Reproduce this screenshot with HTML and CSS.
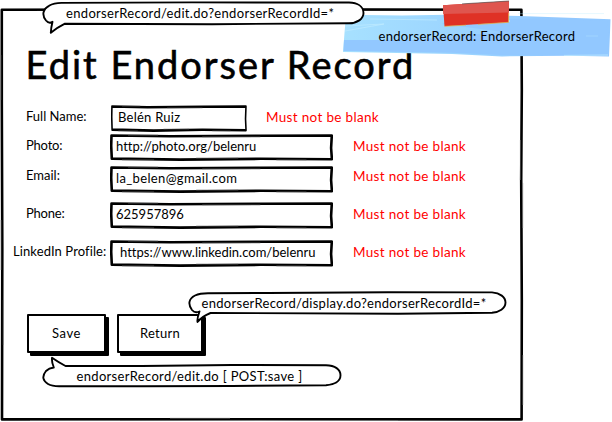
FILE: index.html
```html
<!DOCTYPE html>
<html lang="en">
<head>
<meta charset="utf-8">
<title>Edit Endorser Record</title>
<link rel="stylesheet" href="styles.css">
</head>
<body>
<svg class="defs" aria-hidden="true">
  <symbol id="field-outline" viewBox="0 0 223 27" preserveAspectRatio="none">
    <path class="edge" d="M1.5 1.5 L60 2.2 L150 1.7 L221.3 1.6 L220.6 14 L221.4 25.2 L150 24.8 L70 25.6 L1.8 24.6 L1.2 12 Z"/>
    <path class="streak" d="M18 1 H48 M92 3 H150 M12 26 H44 M86 24 H128 M166 26 H196"/>
  </symbol>
</svg>

<main class="window">
  <svg class="frame" viewBox="0 0 524 422" aria-hidden="true">
    <path d="M1.8 9.8 L250 9.4 L521.4 9.8 L521.8 90 L521.2 180 L521.8 300 L521.6 419.4 L260 419.2 L2 419.4 L2.3 250 L1.8 100 Z"/>
    <path class="streak" d="M522.7 183 V228 M520.4 140 V180 M522.8 355 V405 M30 420.500 H120 M170 418.3 H230 M300 420.500 H398 M.8 55 V100 M1 220 V270 M3.3 300 V345"/>
  </svg>

  <h1 class="title">Edit Endorser Record</h1>

  <form class="form">
    <div class="row row-name">
      <label class="label">Full Name:</label>
      <div class="field field-short"><svg class="outline"><use href="#field-outline"/></svg><span class="value v-name">Belén Ruiz</span></div>
      <span class="error">Must not be blank</span>
    </div>
    <div class="row row-photo">
      <label class="label l-photo">Photo:</label>
      <div class="field"><svg class="outline"><use href="#field-outline"/></svg><span class="value">http://photo.org/belenru</span></div>
      <span class="error">Must not be blank</span>
    </div>
    <div class="row row-email">
      <label class="label">Email:</label>
      <div class="field"><svg class="outline"><use href="#field-outline"/></svg><span class="value v-email">la_belen@gmail.com</span></div>
      <span class="error">Must not be blank</span>
    </div>
    <div class="row row-phone">
      <label class="label l-photo">Phone:</label>
      <div class="field"><svg class="outline"><use href="#field-outline"/></svg><span class="value">625957896</span></div>
      <span class="error">Must not be blank</span>
    </div>
    <div class="row row-linkedin">
      <label class="label l-linkedin">LinkedIn Profile:</label>
      <div class="field"><svg class="outline"><use href="#field-outline"/></svg><span class="value v-linkedin">https://www.linkedin.com/belenru</span></div>
      <span class="error">Must not be blank</span>
    </div>
  </form>

  <div class="actions">
    <button class="button save" type="button">Save</button>
    <button class="button return" type="button">Return</button>
  </div>
</main>

<aside class="note">
  <svg class="shape" viewBox="0 0 270 60" aria-hidden="true">
    <defs><linearGradient id="wash"><stop offset="0" stop-color="#a7e1ff"/><stop offset=".45" stop-color="#9bd4ff"/><stop offset=".8" stop-color="#92c8ff"/></linearGradient></defs>
    <path fill="url(#wash)" d="M4 14.8 L60 15.5 L120 14.6 L178 16 L268.5 19.2 L267.8 38 L267 56.5 L228 55.8 L160 56.4 L110 54 L55 53 L1 52 L2.5 33 Z"/>
    <path fill="#92c8ff" d="M2 40 L70 40 L150 33 L267 30 L266.5 55.5 L228 54.8 L160 55 L110 52.8 L1.5 51 Z M110 20 L200 18.5 L266 21 L264 31 L170 33 L100 24 Z"/>
    <path class="gleam" d="M3 26 L42 24 L3 31 M28 19 L95 20 M130 24 L168 21 L130 21 M222 55.4 L266 55"/>
    <path class="gleam faint" d="M176 13.6 H262 M244 36 H256"/>
    <path fill="#df3125" d="M101 5.2 L167 1 L166.5 22.3 L102.5 26.3 Z"/>
    <path fill="#df554e" d="M101 5.2 L167 1 L166.8 12.5 L101.2 14 Z"/>
    <path fill="none" stroke="#edae36" stroke-width=".7" d="M102.5 26.3 L124 25.2 M136 24.4 L166.5 22.3 L166.8 13"/>
    <path fill="none" stroke="#555" stroke-width=".7" d="M120 3.9 L167 1"/>
  </svg>
  <span class="note-text">endorserRecord: EndorserRecord</span>
</aside>

<div class="balloon balloon-top">
  <svg class="shape" viewBox="0 0 324 34" aria-hidden="true"><path d="M22.5 23.8 Q14 28 8.8 32.8 Q9 28 10.5 21.8 Q7 24 4 20.5 C-.5 15 1 9 7 5.8 Q12 2.8 20 2.9 L150 2.4 L307 2.5 C315 2.7 321.5 6 321.5 13 C321.5 19 315 23.2 307 23.3 L170 24.2 Z"/></svg>
  <span class="balloon-text">endorserRecord/edit.do?endorserRecordId=*</span>
</div>

<div class="balloon balloon-display">
  <svg class="shape" viewBox="0 0 320 34" aria-hidden="true"><path d="M22.5 22 Q14 25.5 9.5 31 Q9 27 11.5 20.5 Q7 22.5 4 19 C-.5 13 1 7.5 7 4.5 Q12 2.2 20 2.2 L80 2 L200 1.2 L304 1.4 C312 2 317.500 6 317.500 11.5 C317.500 17.5 311 21.2 304 21.8 L210 22.7 Z"/></svg>
  <span class="balloon-text">endorserRecord/display.do?endorserRecordId=*</span>
</div>

<div class="balloon balloon-save">
  <svg class="shape" viewBox="0 0 301 34" aria-hidden="true"><path d="M23.5 10 Q16 6 10 1.8 Q9.5 6 11.8 11.5 Q7 12 4 15 C-.5 20.5 1 25 6 28 Q10 30.3 17 30.3 L100 30.2 L190 30 L284 29.2 C292 28.7 298.5 25.5 298.5 19.3 C298.5 13.5 293 9.3 284 9.2 L190 9 L100 10 Z"/></svg>
  <span class="balloon-text">endorserRecord/edit.do [ POST:save ]</span>
</div>
</body>
</html>
```
FILE: styles.css
```css
* { box-sizing: border-box; }

body {
  position: relative;
  width: 612px;
  height: 422px;
  margin: 0;
  overflow: hidden;
  background: #fff;
  color: #000;
  font: 13px/24px Lato, "Open Sans", sans-serif;
  font-variant-ligatures: none;
}

.defs { position: absolute; width: 0; height: 0; }

.window {
  position: relative;
  width: 524px;
  height: 422px;
  padding: 42px 0 0;
}

.frame { position: absolute; inset: 0; width: 524px; height: 422px; }
.frame path, .edge { fill: none; stroke: #000; stroke-width: 2.6; stroke-linejoin: round; }
.frame .streak, .streak { fill: none; stroke: #777; stroke-width: .6; }

.title {
  height: 63px;
  margin: 0;
  padding-left: 25.5px;
  font-size: 38px;
  font-weight: 400;
  line-height: 45px;
  letter-spacing: 2px;
  -webkit-text-stroke: .6px #000;
  white-space: nowrap;
}

.form { display: flex; flex-direction: column; }
.row { display: flex; align-items: flex-start; white-space: nowrap; }
.row-name { height: 29px; }
.row-photo { height: 32px; }
.row-email { height: 36px; }
.row-phone { height: 38px; }
.row-linkedin { height: 27px; }

.label { width: 109.5px; padding-left: 26px; line-height: 22px; }
.row-name .label { width: 110.5px; }
.l-photo { letter-spacing: -.2px; }
.row-email .label { line-height: 19px; }
.l-linkedin { padding-left: 13px; letter-spacing: .1px; }

.field { position: relative; width: 223.5px; height: 27px; padding-left: 6.5px; }
.field-short { width: 136px; padding-left: 7.5px; }
.outline { position: absolute; inset: 0; width: 100%; height: 27px; }
.value { position: relative; }
.v-name { letter-spacing: .25px; }
.v-email { letter-spacing: .35px; }
.v-linkedin { margin-left: 4px; }

.error {
  margin-left: 20px;
  color: #f00;
  font-size: 13.5px;
  letter-spacing: .33px;
}
.row-name .error { margin-left: 19.5px; }
.row-email .error { line-height: 20px; }

.actions { display: flex; gap: 11px; padding: 47px 0 0 27px; }
.button {
  height: 39px;
  padding: 0 0 2px;
  border: 2px solid #000;
  border-radius: 1px;
  background: #fff;
  color: #000;
  box-shadow: 3px 3px 0 #000;
  font: inherit;
}
.save { width: 79px; letter-spacing: .55px; }
.return { width: 86px; letter-spacing: .3px; }

.shape { position: absolute; inset: 0; width: 100%; height: 100%; }

.note { position: absolute; left: 342px; top: 0; width: 270px; height: 60px; }
.gleam { fill: none; stroke: #bdeaff; stroke-width: .8; }
.faint { stroke-opacity: .45; }
.note-text {
  position: relative;
  display: block;
  padding: 24px 0 0 36.5px;
  letter-spacing: .3px;
  white-space: nowrap;
}

.balloon { position: absolute; height: 34px; white-space: nowrap; }
.balloon path { fill: #fff; stroke: #000; stroke-width: 1.9; stroke-linejoin: round; }
.balloon-text { position: relative; display: block; letter-spacing: .33px; }
.balloon-top { left: 42px; top: 0; width: 324px; }
.balloon-top .balloon-text { padding: 1px 0 0 24px; }
.balloon-display { left: 188px; top: 291px; width: 320px; }
.balloon-display .balloon-text { padding-left: 13.5px; letter-spacing: .3px; }
.balloon-save { left: 42px; top: 356px; width: 301px; }
.balloon-save .balloon-text { padding: 8px 0 0 34.5px; }
```
